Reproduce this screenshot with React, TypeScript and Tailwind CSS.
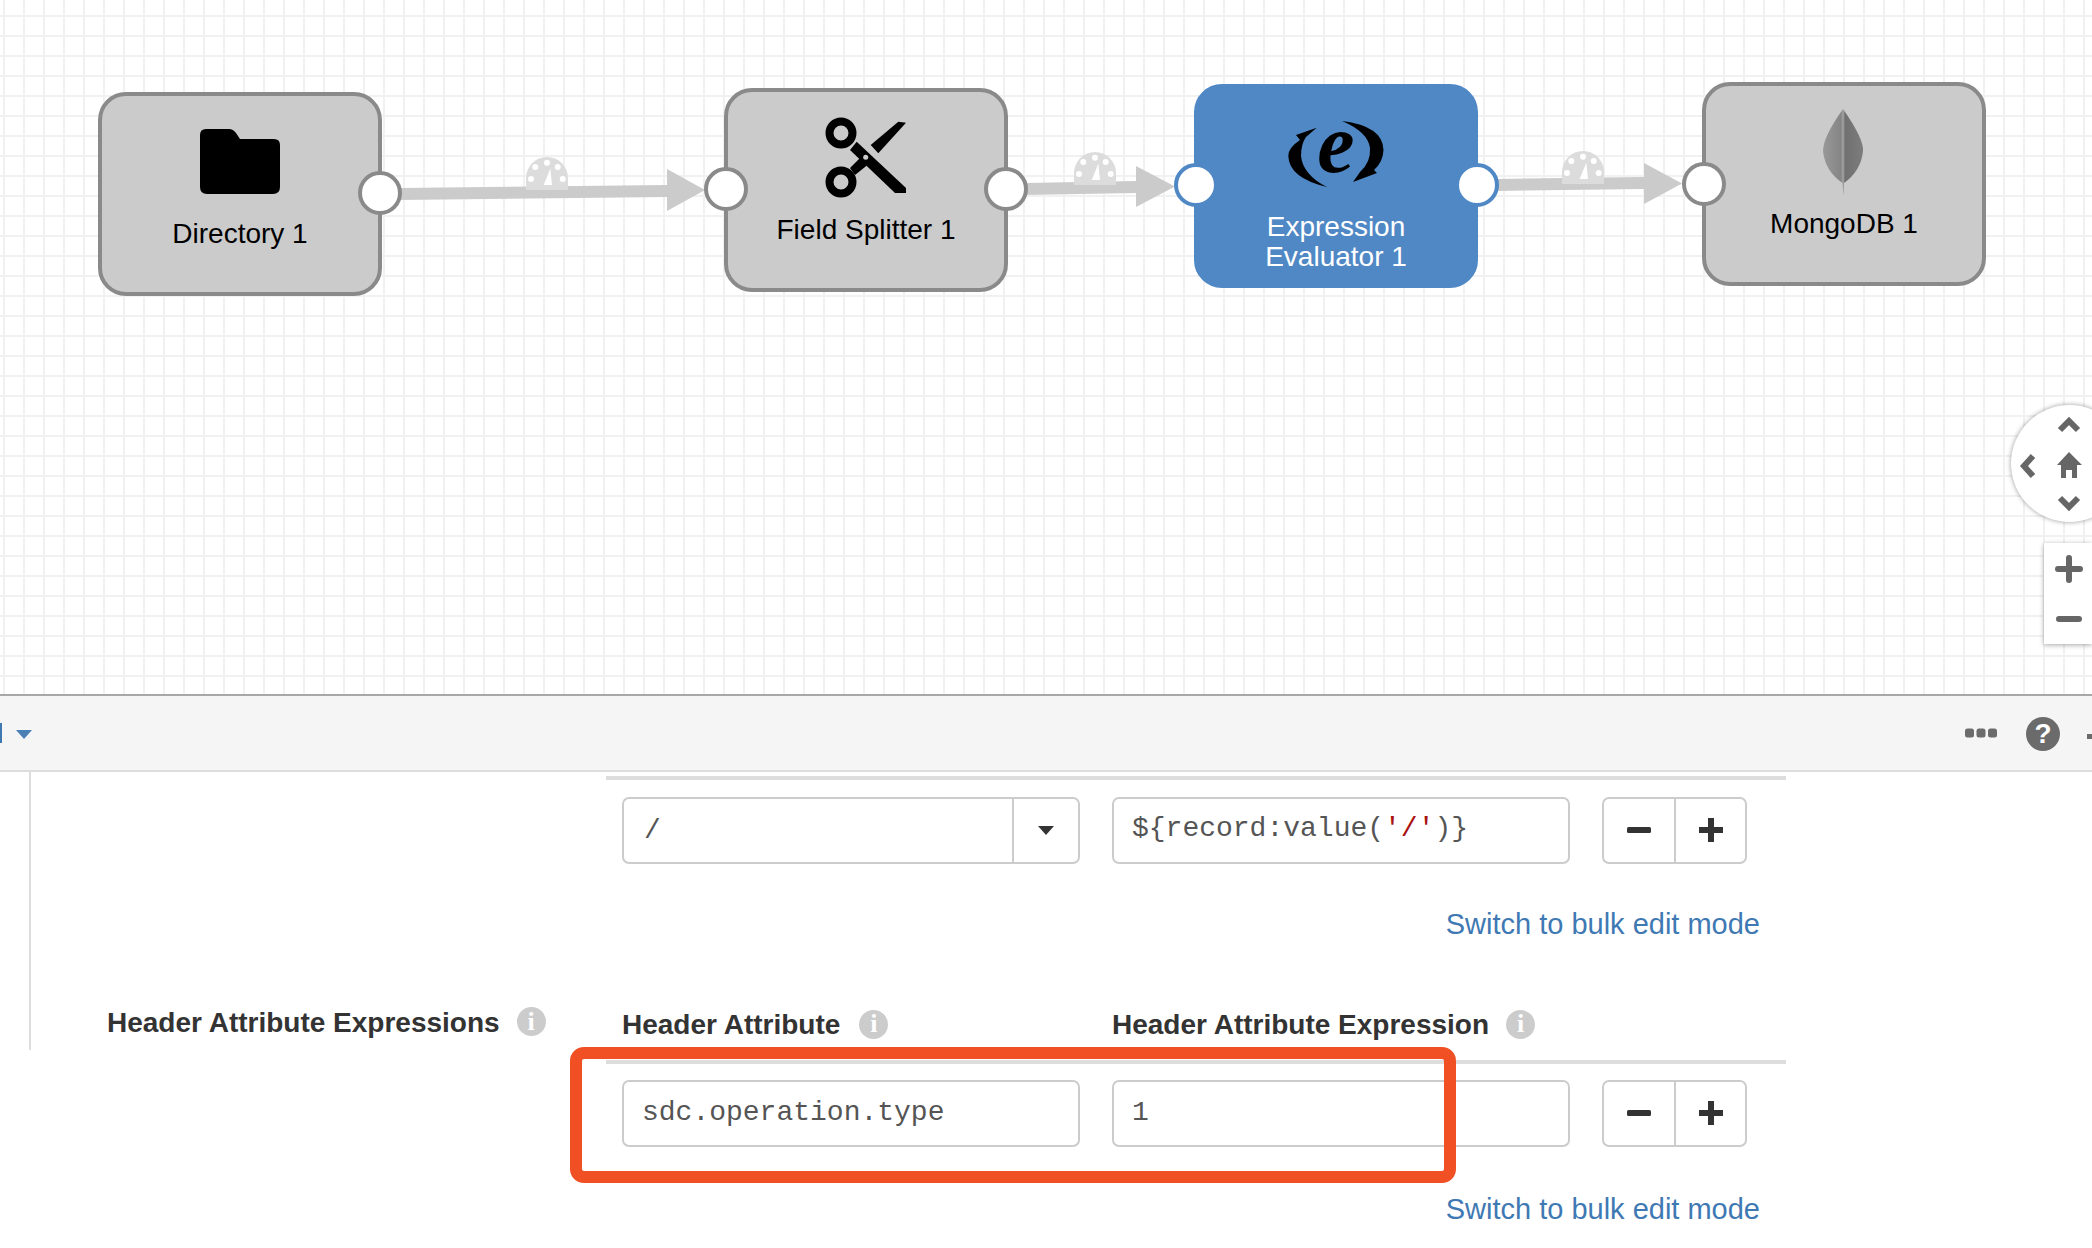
const sans = "font-['Liberation_Sans',Arial,sans-serif]";

function Gauge({ x, y }: { x: number; y: number }) {
  return (
    <g transform={`translate(${x} ${y})`}>
      <path d="M-21 33 V21 A21 21 0 0 1 21 21 V33 Z" fill="#dcdcdc" />
      <circle cx="-11.7" cy="10" r="3" fill="#fff" />
      <circle cx="0" cy="5.7" r="3" fill="#fff" />
      <circle cx="10.7" cy="10" r="3" fill="#fff" />
      <circle cx="-16" cy="22" r="3" fill="#fff" />
      <circle cx="15.7" cy="22" r="3" fill="#fff" />
      <path d="M3.3 11.7 L5 28 H-3.3 Z" fill="#fff" />
    </g>
  );
}

function Connections() {
  return (
    <svg className="absolute inset-0" width="2092" height="694" viewBox="0 0 2092 694">
      <g fill="#cbcbcb">
        <polygon points="400,188 667,185 667,197 400,200" />
        <polygon points="667,169 705,190 667,211" />
        <polygon points="1024,183 1136,181 1136,193 1024,195" />
        <polygon points="1136,166 1175,186.5 1136,207" />
        <polygon points="1496,179 1644,177 1644,189 1496,191" />
        <polygon points="1644,163 1682,183.5 1644,204" />
      </g>
      <Gauge x={547} y={157} />
      <Gauge x={1095} y={152} />
      <Gauge x={1583} y={151} />
    </svg>
  );
}

function Port({ x, y, blue }: { x: number; y: number; blue?: boolean }) {
  return (
    <div
      className={`absolute w-[44px] h-[44px] -ml-[22px] -mt-[22px] rounded-full bg-white border-[4px] ${blue ? "border-[#4f88c5]" : "border-[#8a8a8a]"}`}
      style={{ left: x, top: y }}
    />
  );
}

function Node({
  x, y, blue, children, label, labelTop,
}: {
  x: number; y: number; blue?: boolean; children: React.ReactNode; label: React.ReactNode; labelTop: number;
}) {
  return (
    <div
      className={`absolute w-[284px] h-[204px] rounded-[28px] border-[4px] ${blue ? "bg-[#4f88c5] border-[#4f88c5] text-white" : "bg-[#cbcbcb] border-[#8a8a8a] text-black"} ${sans}`}
      style={{ left: x, top: y }}
    >
      {children}
      <div
        className="absolute inset-x-0 text-center text-[28px] leading-[30px]"
        style={{ top: labelTop }}
      >
        {label}
      </div>
    </div>
  );
}

function Folder() {
  return (
    <svg className="absolute left-[98px] top-[33px]" width="80" height="65" viewBox="0 0 80 65">
      <path d="M6 0 H29 Q33 0 36 4 L40 10 H74 Q80 10 80 16 V58 Q80 65 73 65 H7 Q0 65 0 58 V6 Q0 0 6 0 Z" fill="#000" />
    </svg>
  );
}

function Scissors() {
  return (
    <svg className="absolute left-[94px] top-[24px]" width="90" height="86" viewBox="0 0 90 86">
      <circle cx="19" cy="17" r="11.5" strokeWidth="8" fill="none" stroke="#000" />
      <circle cx="19" cy="66" r="11.5" strokeWidth="8" fill="none" stroke="#000" />
      <polygon points="34.7,25.7 84,72 84,77 73,77 28,34" fill="#000" />
      <polygon points="48.7,29 76.3,5.7 84,6.7 56.3,37.3" fill="#000" />
      <polygon points="28,52 40,40 48,47 33,59" fill="#000" />
      <circle cx="43.7" cy="41.3" r="2.5" fill="#cbcbcb" />
    </svg>
  );
}

function ELogo() {
  return (
    <svg className="absolute left-[88px] top-[2px]" width="104" height="110" viewBox="0 0 104 110">
      <g transform="translate(0 30)">
        <path d="M30.7 7.7 L10 15 L14 20 Q2 28 2.3 36 Q3 58 41 67 Q17 55 15 36 Q15 24 20 17 Z" fill="#000" />
        <path d="M56 1 Q97 6 97.5 30 Q97 42 88 50 L91 53 L67 62 L74 52 Q85 42 84 28 Q82 12 56 1 Z" fill="#000" />
        <text x="50" y="52" textAnchor="middle" fontFamily="'Liberation Serif',serif" fontStyle="italic" fontWeight="bold" fontSize="84" fill="#000">e</text>
      </g>
    </svg>
  );
}

function Leaf() {
  return (
    <svg className="absolute left-[117px] top-[23px]" width="42" height="88" viewBox="0 0 42 88">
      <defs>
        <linearGradient id="leaf" x1="0" x2="1" y1="0" y2="0">
          <stop offset="0" stopColor="#999999" />
          <stop offset="0.45" stopColor="#858585" />
          <stop offset="0.5" stopColor="#a5a5a5" />
          <stop offset="0.55" stopColor="#707070" />
          <stop offset="1" stopColor="#7d7d7d" />
        </linearGradient>
      </defs>
      <path d="M20 0 Q41 30 40 42 Q38 62 21 74 L20.5 87 L19.5 74 Q2 62 0 42 Q0 28 20 0 Z" fill="url(#leaf)" />
    </svg>
  );
}

function Nav() {
  const c = "#666";
  return (
    <>
      <div className="absolute left-[2011px] top-[405px] w-[117px] h-[117px] rounded-full bg-white shadow-[0_0_5px_rgba(0,0,0,0.4)]" />
      <svg className="absolute left-[2011px] top-[405px]" width="81" height="117" viewBox="2011 405 81 117">
        <path d="M2060 430 L2069 421 L2078 430" fill="none" stroke={c} strokeWidth="6" />
        <path d="M2060 498 L2069 507 L2078 498" fill="none" stroke={c} strokeWidth="6" />
        <path d="M2033 456 L2024 466 L2033 476" fill="none" stroke={c} strokeWidth="6" />
        <path d="M2069 452 L2057 465 H2061 V478 H2066 V470 H2072 V478 H2077 V465 H2082 Z" fill={c} />
      </svg>
      <div className="absolute left-[2044px] top-[543px] w-[48px] h-[101px] bg-white shadow-[0_1px_5px_rgba(0,0,0,0.35)]" />
      <svg className="absolute left-[2044px] top-[543px]" width="48" height="101" viewBox="2044 543 48 101">
        <path d="M2058 569 H2080 M2069 558 V580" stroke={c} strokeWidth="6" strokeLinecap="round" />
        <path d="M2059 619 H2079" stroke={c} strokeWidth="6" strokeLinecap="round" />
      </svg>
    </>
  );
}

function Toolbar() {
  return (
    <div className="h-[78px] bg-[#f5f5f5] border-t-2 border-b-2 border-t-[#a8a8a8] border-b-[#dddddd] flex items-center justify-between">
      <div className="flex items-center">
        <div className="w-[2px] h-[20px] bg-[#3f78b0]" />
        <svg className="ml-[14px] mt-[3px]" width="16" height="9" viewBox="0 0 16 9"><path d="M0 0 H16 L8 9 Z" fill="#4a7fb5" /></svg>
      </div>
      <div className="flex items-center">
        <svg width="32" height="10" viewBox="0 0 32 10" fill="#6b6b6b">
          <rect x="0" y="0.5" width="9" height="9" rx="2.5" />
          <rect x="11.5" y="0.5" width="9" height="9" rx="2.5" />
          <rect x="23" y="0.5" width="9" height="9" rx="2.5" />
        </svg>
        <div className={`ml-[29px] w-[34px] h-[34px] mt-[2px] rounded-full bg-[#6b6b6b] text-white flex items-center justify-center text-[28px] font-bold leading-none ${sans}`}>?</div>
        <div className="ml-[27px] w-[5px] h-[5px] mt-[6px] bg-[#6b6b6b]" />
      </div>
    </div>
  );
}

function Info() {
  return (
    <span className="inline-flex w-[29px] h-[29px] rounded-full bg-[#cccccc] text-white items-center justify-center text-[26px] font-bold leading-none font-['Liberation_Serif',serif]">i</span>
  );
}

function Stepper() {
  return (
    <div className="w-[145px] h-[67px] border-2 border-[#cccccc] rounded-[7px] flex text-[#333]">
      <div className="w-[72px] pb-[2px] border-r-2 border-[#cccccc] flex items-center justify-center">
        <svg width="24" height="6" viewBox="0 0 24 6"><rect width="24" height="6" rx="1.5" fill="#333" /></svg>
      </div>
      <div className="flex-1 pb-[2px] flex items-center justify-center">
        <svg width="24" height="24" viewBox="0 0 24 24"><path d="M0 12 H24 M12 0 V24" stroke="#333" strokeWidth="6" /></svg>
      </div>
    </div>
  );
}

const fieldClass = "h-[67px] border-2 border-[#cccccc] rounded-[7px] bg-white flex items-center font-['Liberation_Mono',monospace] text-[28px] text-[#555] shrink-0";

function BulkLink() {
  return (
    <div className="flex justify-end pr-[26px]">
      <span className={`text-[29px] leading-[32px] text-[#3f79b3] ${sans}`}>Switch to bulk edit mode</span>
    </div>
  );
}

export default function App() {
  return (
    <div className={`relative w-[2092px] h-[1248px] bg-white overflow-hidden ${sans}`}>
      <div className="relative h-[694px] bg-white bg-[linear-gradient(to_right,#f1f1f1_2px,transparent_2px),linear-gradient(to_bottom,#f1f1f1_2px,transparent_2px)] bg-[size:20px_20px] bg-[position:3px_15px]">
        <Connections />
        <Node x={98} y={92} label="Directory 1" labelTop={123}><Folder /></Node>
        <Node x={724} y={88} label="Field Splitter 1" labelTop={123}><Scissors /></Node>
        <Node x={1194} y={84} blue label={<>Expression<br />Evaluator 1</>} labelTop={124}><ELogo /></Node>
        <Node x={1702} y={82} label="MongoDB 1" labelTop={123}><Leaf /></Node>
        <Port x={380} y={193} />
        <Port x={726} y={189} />
        <Port x={1006} y={189} />
        <Port x={1196} y={185} blue />
        <Port x={1477} y={185} blue />
        <Port x={1704} y={184} />
        <Nav />
      </div>
      <Toolbar />
      <div className="flex">
        <div className="ml-[29px] w-[2px] h-[278px] bg-[#dddddd] shrink-0" />
        <div className="flex-1">
          <section className="ml-[575px] w-[1180px] mt-[4px]">
            <div className="border-t-4 border-[#dddddd] pt-[17px] pl-[16px] flex">
              <div className={`${fieldClass} w-[458px]`}>
                <div className="flex-1 pl-[20px]">/</div>
                <div className="w-[66px] h-full border-l-2 border-[#cccccc] flex items-center justify-center">
                  <svg width="16" height="9" viewBox="0 0 16 9"><path d="M0 0 H16 L8 9 Z" fill="#333" /></svg>
                </div>
              </div>
              <div className={`${fieldClass} w-[458px] ml-[32px] pl-[18px] pb-[3px]`}>
                <span>{"${record:value("}<span className="text-[#a11]">'/'</span>{")}"}</span>
              </div>
              <div className="ml-[32px]"><Stepper /></div>
            </div>
            <div className="mt-[44px]"><BulkLink /></div>
          </section>
          <section className="flex pl-[76px] mt-[69px]">
            <div className="w-[499px] shrink-0 flex items-center h-[32px] gap-[17px]">
              <span className="text-[28px] font-bold text-[#333] leading-[32px] -mt-[4px]">Header Attribute Expressions</span>
              <span className="-mt-[6px]"><Info /></span>
            </div>
            <div className="w-[1180px]">
              <div className="h-[51px] pl-[16px] flex items-start text-[28px] font-bold text-[#333] leading-[32px]">
                <div className="w-[490px] flex items-center gap-[19px]"><span>Header Attribute</span><span className="-mt-[4px]"><Info /></span></div>
                <div className="flex items-center gap-[17px]"><span>Header Attribute Expression</span><span className="-mt-[4px]"><Info /></span></div>
              </div>
              <div className="border-t-4 border-[#dddddd] pt-[16px] pl-[16px] flex">
                <div className={`${fieldClass} w-[458px] pl-[18px] pb-[2px]`}>sdc.operation.type</div>
                <div className={`${fieldClass} w-[458px] ml-[32px] pl-[18px] pb-[2px] text-[#1f6f50]`}>1</div>
                <div className="ml-[32px]"><Stepper /></div>
              </div>
              <div className="mt-[46px]"><BulkLink /></div>
            </div>
          </section>
        </div>
      </div>
      <div className="absolute left-[570px] top-[1047px] w-[886px] h-[136px] border-[12px] border-[#f15025] rounded-[14px]" />
    </div>
  );
}
